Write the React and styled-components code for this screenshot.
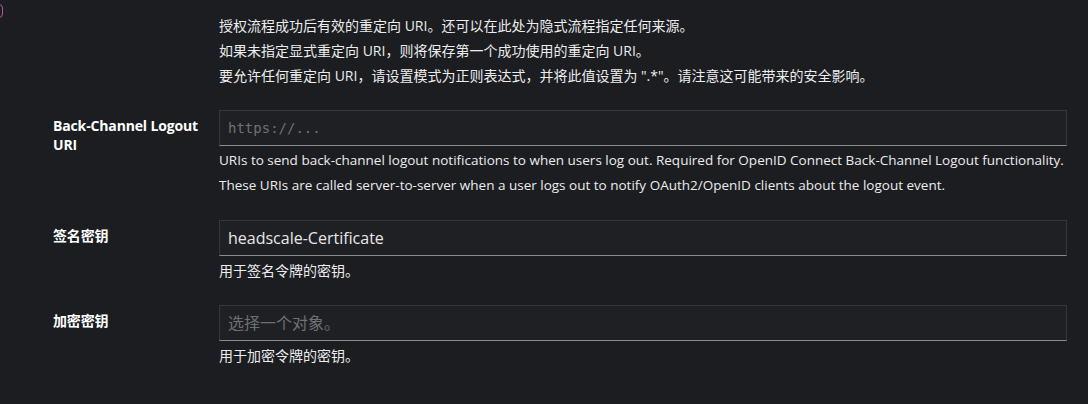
import styled, { createGlobalStyle } from "styled-components";

const GlobalStyle = createGlobalStyle`
  html, body {
    margin: 0;
    padding: 0;
    background: #1b1d21;
  }
  body {
    font-family: "Open Sans", "Noto Sans CJK SC", sans-serif;
    color: #e0e0e0;
  }
`;

const groups = [
  {
    label: null,
    helper: [
      "授权流程成功后有效的重定向 URI。还可以在此处为隐式流程指定任何来源。",
      "如果未指定显式重定向 URI，则将保存第一个成功使用的重定向 URI。",
      "要允许任何重定向 URI，请设置模式为正则表达式，并将此值设置为 \".*\"。请注意这可能带来的安全影响。",
    ],
  },
  {
    label: "Back-Channel Logout URI",
    placeholder: "https://...",
    mono: true,
    latin: true,
    helper: [
      "URIs to send back-channel logout notifications to when users log out. Required for OpenID Connect Back-Channel Logout functionality.",
      "These URIs are called server-to-server when a user logs out to notify OAuth2/OpenID clients about the logout event.",
    ],
  },
  {
    label: "签名密钥",
    value: "headscale-Certificate",
    helper: ["用于签名令牌的密钥。"],
  },
  {
    label: "加密密钥",
    placeholder: "选择一个对象。",
    helper: ["用于加密令牌的密钥。"],
  },
];

export default function App() {
  return (
    <>
      <GlobalStyle />
      <Page>
        <EdgeMark />
        <Form>
          {groups.map((group, i) => (
            <Group key={i}>
              <Label>{group.label}</Label>
              <Control>
                {group.label && (
                  <Input
                    $mono={group.mono}
                    placeholder={group.placeholder}
                    defaultValue={group.value}
                    readOnly
                  />
                )}
                <Helper $first={!group.label}>
                  {group.helper.map((line) => (
                    <HelperLine key={line} $latin={group.latin}>
                      {line}
                    </HelperLine>
                  ))}
                </Helper>
              </Control>
            </Group>
          ))}
        </Form>
      </Page>
    </>
  );
}

const Page = styled.div`
  position: relative;
  width: 1088px;
  height: 404px;
  overflow: hidden;
  background: #1b1d21;
`;

const EdgeMark = styled.span`
  position: absolute;
  left: -8px;
  top: 4px;
  width: 9px;
  height: 12px;
  border: 1px solid #b4569a;
  border-radius: 4px;
`;

const Form = styled.div`
  display: flex;
  flex-direction: column;
  gap: 24px;
  padding: 15px 21px 0 53px;
`;

const Group = styled.div`
  display: grid;
  grid-template-columns: 150px minmax(0, 1fr);
  column-gap: 16px;
`;

const Label = styled.div`
  padding-top: 6px;
  font-size: 14px;
  font-weight: 700;
  line-height: 19px;
  letter-spacing: -0.15px;
  color: #ffffff;
`;

const Control = styled.div`
  display: flex;
  flex-direction: column;
  min-width: 0;
`;

const Input = styled.input`
  box-sizing: border-box;
  width: 100%;
  height: 36px;
  padding: 5px 8px;
  background: #1f2024;
  border: 1px solid #36373a;
  border-bottom-color: #8a8d90;
  color: #e8e8e8;
  font-family: ${(p) =>
    p.$mono
      ? '"DejaVu Sans Mono", "Liberation Mono", monospace'
      : '"Open Sans", "Noto Sans CJK SC", sans-serif'};
  font-size: ${(p) => (p.$mono ? "14px" : "16px")};
  outline: none;

  &::placeholder {
    color: #6e7074;
  }
`;

const Helper = styled.div`
  display: flex;
  flex-direction: column;
  gap: 4px;
  margin-top: ${(p) => (p.$first ? "0" : "4px")};
`;

const HelperLine = styled.div`
  font-size: ${(p) => (p.$latin ? "13.5px" : "14px")};
  line-height: 21px;
  color: #ececec;
  white-space: nowrap;
`;
